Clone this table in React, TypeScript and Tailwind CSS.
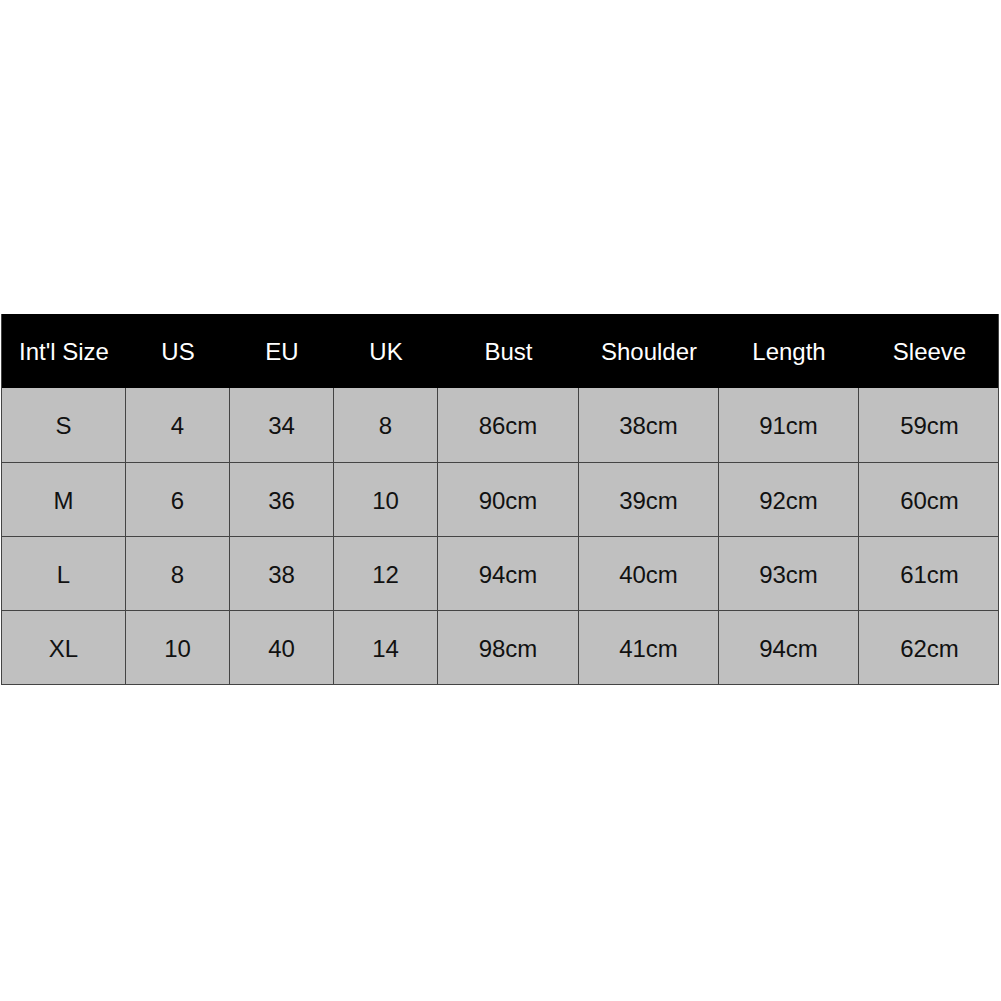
const headers = ["Int'l Size", "US", "EU", "UK", "Bust", "Shoulder", "Length", "Sleeve"];

const rows = [
  ["S", "4", "34", "8", "86cm", "38cm", "91cm", "59cm"],
  ["M", "6", "36", "10", "90cm", "39cm", "92cm", "60cm"],
  ["L", "8", "38", "12", "94cm", "40cm", "93cm", "61cm"],
  ["XL", "10", "40", "14", "98cm", "41cm", "94cm", "62cm"],
];

const cols = "grid grid-cols-[124px_104px_104px_104px_141px_140px_140px_141px]";

export default function App() {
  return (
    <div className="w-[1001px] h-[1001px] bg-white pt-[314px] pl-[1px] font-['Liberation_Sans',Arial,sans-serif] text-[24px]">
      <div className="w-[998px] border-l border-r border-b border-[#444]">
        <div className={`${cols} h-[74px] bg-black text-white`}>
          {headers.map((h) => (
            <div key={h} className="flex items-center justify-center pt-[2px]">
              {h}
            </div>
          ))}
        </div>
        {rows.map((r, i) => (
          <div
            key={i}
            className={`${cols} h-[74px] bg-[#c0c0c0] text-[#111] ${i > 0 ? "border-t border-[#444]" : ""}`}
          >
            {r.map((c, j) => (
              <div
                key={j}
                className={`flex items-center justify-center pt-[2px] ${j < 7 ? "border-r border-[#444]" : ""}`}
              >
                {c}
              </div>
            ))}
          </div>
        ))}
      </div>
    </div>
  );
}
